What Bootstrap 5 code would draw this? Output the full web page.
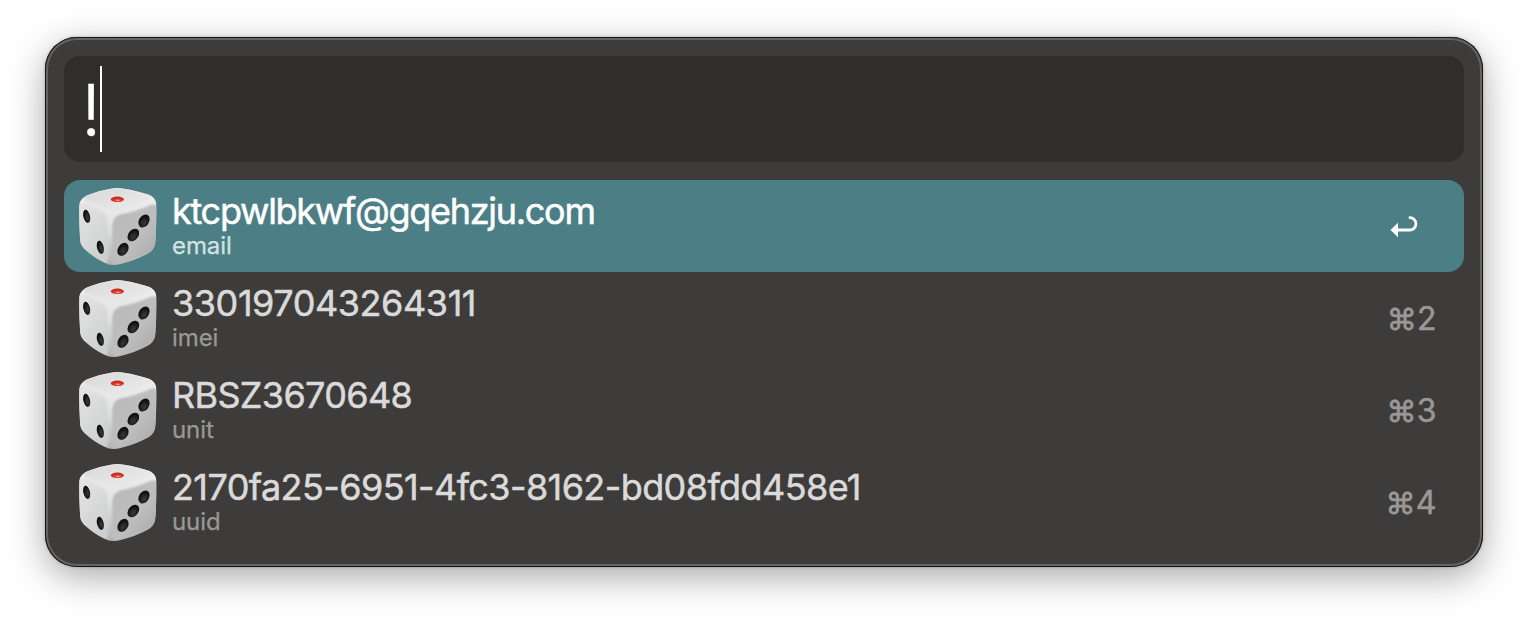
<!DOCTYPE html>
<html lang="en">
<head>
<meta charset="utf-8">
<title>Launcher</title>
<meta name="viewport" content="width=device-width, initial-scale=1">
<link href="https://cdn.jsdelivr.net/npm/bootstrap@5.3.0/dist/css/bootstrap.min.css" rel="stylesheet">
<style>
body{background:#fff;font-family:Inter,"Liberation Sans",sans-serif}
.stage{padding:37px 45px 0;height:620px}
.launcher{height:530px;padding:19px 19px 0;background:#3e3c3a;border-radius:32px;box-shadow:inset 0 0 0 1px #161616,inset 0 0 0 3px #656463,0 0 3px rgba(0,0,0,.25),0 10px 36px rgba(0,0,0,.34)}
.query{height:106px;border-radius:16px;background:#2f2e2c;margin-bottom:18px;padding-left:17px;color:#fff;font-size:72px;line-height:1;font-weight:300}
.query .bang{width:19px;padding-top:2px;-webkit-text-stroke:.4px}
.caret{width:2px;height:86px;background:#fff}
.result{height:92px;border-radius:16px;padding:0 28px 0 14px;color:#dadada}
.result.active{background:#4b7f85;color:#fff}
.die{width:80px;height:80px;margin-right:14px;flex:none}
.ttl{font-size:36px;line-height:36px;white-space:nowrap;letter-spacing:-.59px;-webkit-text-stroke:.5px}
.ttl.email{letter-spacing:-1.29px}
.ttl.imei{letter-spacing:-.43px}
.ttl.unit{letter-spacing:-.65px}
.sub{font-size:24px;line-height:26px;margin-top:4px;color:#999897;-webkit-text-stroke:.25px;letter-spacing:-.1px}
.active .sub{color:#d5e1e2}
.key{font-size:32px;line-height:40px;padding-top:1px;color:#999897;letter-spacing:-.5px;-webkit-text-stroke:.5px}
.key span{font-size:30px;letter-spacing:.3px;-webkit-text-stroke:.7px}
.enter{width:46px;height:40px}
</style>
</head>
<body>
<svg width="0" height="0" class="position-absolute">
<defs>
<linearGradient id="gt" x1="0" y1="0" x2="1" y2="1"><stop offset="0" stop-color="#d8d8d8"/><stop offset="1" stop-color="#ededed"/></linearGradient>
<linearGradient id="gl" x1="0" y1="0" x2=".6" y2="1"><stop offset="0" stop-color="#e6e6e6"/><stop offset="1" stop-color="#cecfd0"/></linearGradient>
<linearGradient id="gr" x1="0" y1="0" x2="1" y2="1"><stop offset="0" stop-color="#b8b8b8"/><stop offset=".55" stop-color="#bebebe"/><stop offset="1" stop-color="#a6a6a6"/></linearGradient>
<linearGradient id="ge" x1="0" y1="0" x2="0" y2="1"><stop offset="0" stop-color="#f2f2f2"/><stop offset=".5" stop-color="#e2e2e2"/><stop offset="1" stop-color="#b0b0b0"/></linearGradient>
<radialGradient id="gp" cx=".6" cy=".6"><stop offset="0" stop-color="#3a3a3a"/><stop offset=".6" stop-color="#222"/><stop offset="1" stop-color="#101010"/></radialGradient>
<filter id="soft" x="-10%" y="-10%" width="120%" height="120%"><feGaussianBlur stdDeviation="3"/></filter>
<clipPath id="body"><path d="M28 82C27 64 36 54 52 46C75 36 98 30 122 26Q142 22 162 26C188 30 212 36 232 43C252 50 260 60 259 80Q260 132 256 184C255 204 246 214 231 222Q194 242 151 252Q122 259 104 248Q74 235 47 210C33 198 30 187 30 172Q27 125 28 82Z"/></clipPath>
<symbol id="dice" viewBox="24 18 240 240">
<g clip-path="url(#body)">
<path fill="url(#ge)" d="M20 18h250v244H20z"/>
<g filter="url(#soft)">
<path fill="url(#gl)" d="M24 78Q35 61 52 70L98 95Q111 103 112 121L115 229Q114 258 95 249L42 210Q26 196 26 176Z"/>
<path fill="url(#gr)" d="M127 135Q131 109 152 103Q200 94 236 77Q262 67 264 83L262 190Q260 209 235 222L151 252Q128 260 125 232Z"/>
<path fill="url(#gt)" d="M43 60Q38 47 54 42L125 25Q140 21 157 25L235 43Q252 50 232 63Q190 82 145 89Q121 96 102 87Z"/>
</g></g>
<ellipse cx="142" cy="58" rx="20" ry="8.3" fill="#c92a22"/><ellipse cx="143" cy="61" rx="13" ry="4.5" fill="#e9483b"/><ellipse cx="144" cy="61" rx="4.5" ry="1.8" fill="#f9bbb0"/>
<g fill="url(#gp)"><ellipse cx="50" cy="109" rx="10" ry="20" transform="rotate(-13 50 109)"/><ellipse cx="91" cy="202" rx="10" ry="20" transform="rotate(-13 91 202)"/>
<ellipse cx="222" cy="123" rx="15" ry="21" transform="rotate(32 222 123)"/><ellipse cx="190" cy="165" rx="15" ry="21" transform="rotate(38 190 165)"/><ellipse cx="159" cy="208" rx="15" ry="21" transform="rotate(32 159 208)"/></g>
</symbol>
</defs></svg>
<main class="stage">
<div class="launcher">
<div class="query d-flex align-items-center"><span class="bang text-center">!</span><span class="caret"></span></div>
<div class="d-flex flex-column">
<div class="result active d-flex align-items-center"><svg class="die"><use href="#dice"/></svg><div class="flex-grow-1"><div class="ttl email">ktcpwlbkwf@gqehzju.com</div><div class="sub">email</div></div>
<svg class="enter" viewBox="0 0 46 40"><path d="M7 24H19.8A6.15 6.15 0 0 0 19.8 11.7H18.8" fill="none" stroke="#fff" stroke-width="2.8"/><path d="M.5 24L8 16.8V31.2Z" fill="#fff"/></svg></div>
<div class="result d-flex align-items-center"><svg class="die"><use href="#dice"/></svg><div class="flex-grow-1"><div class="ttl imei">330197043264311</div><div class="sub">imei</div></div><div class="key"><span>⌘</span>2</div></div>
<div class="result d-flex align-items-center"><svg class="die"><use href="#dice"/></svg><div class="flex-grow-1"><div class="ttl unit">RBSZ3670648</div><div class="sub">unit</div></div><div class="key"><span>⌘</span>3</div></div>
<div class="result d-flex align-items-center"><svg class="die"><use href="#dice"/></svg><div class="flex-grow-1"><div class="ttl">2170fa25-6951-4fc3-8162-bd08fdd458e1</div><div class="sub">uuid</div></div><div class="key"><span>⌘</span>4</div></div>
</div>
</div>
</main>
<script src="https://cdn.jsdelivr.net/npm/bootstrap@5.3.0/dist/js/bootstrap.bundle.min.js"></script>
</body>
</html>
